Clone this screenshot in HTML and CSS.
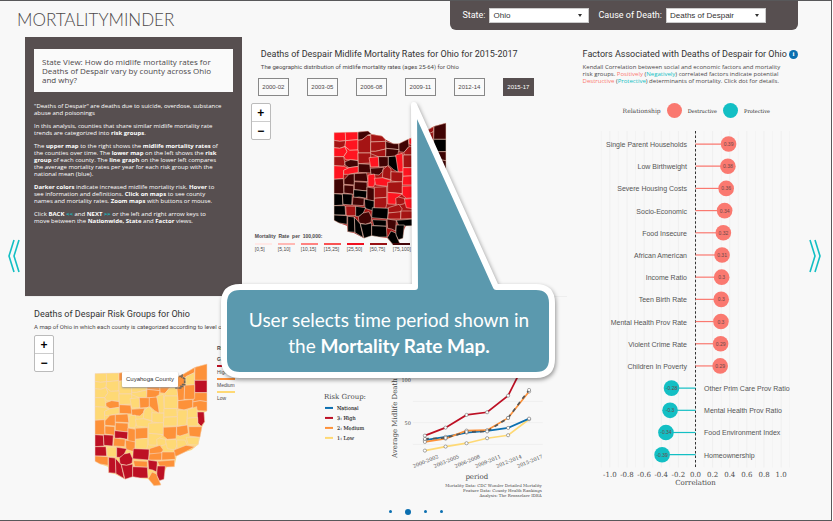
FILE: index.html
```html
<!DOCTYPE html>
<html lang="en">
<head>
<meta charset="utf-8">
<title>MortalityMinder</title>
<link rel="stylesheet" href="styles.css">
</head>
<body>
<div class="page">
  <header class="top">
    <h1 class="logo">MORTALITYMINDER</h1>
    <form class="filters">
      <label class="filter-label" for="state">State:</label>
      <span class="pick"><select id="state"><option>Ohio</option></select></span>
      <label class="filter-label cause" for="cause">Cause of Death:</label>
      <span class="pick"><select id="cause"><option>Deaths of Despair</option></select></span>
    </form>
  </header>

  <main class="board">
    <button class="step back" aria-label="Back"><svg width="12" height="34" viewBox="0 0 12 34"><path d="M6 1 1 17 6 33M11 1 6 17 11 33"/></svg></button>

    <section class="intro">
      <h2 class="intro-title">State View: How do midlife mortality rates for Deaths of Despair vary by county across Ohio and why?</h2>
      <p>"Deaths of Despair" are deaths due to suicide, overdose, substance<br>abuse and poisonings</p>
      <p>In this analysis, counties that share similar midlife mortality rate<br>trends are categorized into <b>risk groups</b>.</p>
      <p>The <b>upper map</b> to the right shows the <b>midlife mortality rates</b> of<br>the counties over time. The <b>lower map</b> on the left shows the <b>risk<br>group</b> of each county. The <b>line graph</b> on the lower left compares<br>the average mortality rates per year for each risk group with the<br>national mean (blue).</p>
      <p><b>Darker colors</b> indicate increased midlife mortality risk. <b>Hover</b> to<br>see information and definitions. <b>Click on maps</b> to see county<br>names and mortality rates. <b>Zoom maps</b> with buttons or mouse.</p>
      <p>Click <b>BACK <i>&lt;&lt;</i></b> and <b>NEXT <i>&gt;&gt;</i></b> or the left and right arrow keys to<br>move between the <b>Nationwide, State</b> and <b>Factor</b> views.</p>
    </section>

    <section class="rates">
      <h2 class="title">Deaths of Despair Midlife Mortality Rates for Ohio for 2015-2017</h2>
      <p class="sub">The geographic distribution of midlife mortality rates (ages 25-64) for Ohio</p>
      <div class="periods">
        <button>2000-02</button><button>2003-05</button><button>2006-08</button><button>2009-11</button><button>2012-14</button><button class="on">2015-17</button>
      </div>
      <div class="map-row">
        <div class="zoomer"><button aria-label="Zoom in">+</button><button aria-label="Zoom out">−</button></div>
        <svg class="map rate-map" id="rate-map" viewBox="42 36 342 374"></svg>
      </div>
      <div class="rate-key">
        <h3>Mortality&nbsp; Rate&nbsp; per&nbsp; 100,000:</h3>
        <ul>
          <li class="r1">[0,5]</li><li class="r2">[5,10]</li><li class="r3">[10,15]</li><li class="r4">[15,25]</li><li class="r5">[25,50]</li><li class="r6">[50,75]</li><li class="r7">[75,100]</li>
        </ul>
      </div>
    </section>

    <section class="groups">
      <h2 class="title">Deaths of Despair Risk Groups for Ohio</h2>
      <p class="sub">A map of Ohio in which each county is categorized according to level of risk</p>
      <div class="map-row">
        <div class="zoomer"><button aria-label="Zoom in">+</button><button aria-label="Zoom out">−</button></div>
        <div class="map-wrap">
          <svg class="map" id="risk-map" viewBox="42 36 342 374"></svg>
          <span class="tip">Cuyahoga County</span>
        </div>
        <div class="risk-key">
          <h3>Risk</h3><h3>Group:</h3>
          <ul><li class="high">High</li><li class="medium">Medium</li><li class="low">Low</li></ul>
        </div>
      </div>
    </section>

    <section class="trend">
      <svg id="trend" viewBox="322 360 226 140">
        <g class="serif">
          <text x="338" y="377" class="t6">Cuyahoga County</text>
          <text x="324" y="399" class="t7">Risk Group:</text>
          <g class="t6 key"><text x="337" y="410">National</text><text x="337" y="420">3: High</text><text x="337" y="430">2: Medium</text><text x="337" y="440">1: Low</text></g>
          <text x="411" y="382" class="t6" text-anchor="end">100</text>
          <text x="411" y="425" class="t6" text-anchor="end">50</text>
          <text transform="translate(397 458) rotate(-90)" class="t7">Average Midlife Deaths per 100,000</text>
          <text x="477" y="479" class="t7" text-anchor="middle">period</text>
          <g class="t5" text-anchor="end"><text x="542" y="487">Mortality Data: CDC Wonder Detailed Mortality</text><text x="542" y="492">Feature Data: County Health Rankings</text><text x="542" y="497">Analysis: The Rensselaer IDEA</text></g>
        </g>
        <g class="swatch"><path class="c-nat" d="M325 408h8"/><path class="c-high" d="M325 418h8"/><path class="c-med" d="M325 428h8"/><path class="c-low" d="M325 438h8"/></g>
        <path class="grid-line" d="M413 401.5h130M413 422.7h130M413 444.5h130"/>
      </svg>
    </section>

    <section class="factors">
      <h2 class="title">Factors Associated with Deaths of Despair for Ohio <button class="info" aria-label="Information">i</button></h2>
      <p class="explain">Kendall Correlation between social and economic factors and mortality<br>risk groups. <span class="bad">Positively</span> (<span class="good">Negatively</span>) correlated factors indicate potential<br><span class="bad">Destructive</span> (<span class="good">Protective</span>) determinants of mortality. Click dot for details.</p>
      <div class="relation"><span class="rel-title">Relationship</span><i class="dot bad-dot"></i><b>Destructive</b><i class="dot good-dot"></i><b>Protective</b></div>
      <svg id="factors" viewBox="583 125 215 365"></svg>
    </section>

    <button class="step next" aria-label="Next"><svg width="12" height="34" viewBox="0 0 12 34"><path d="M1 1 6 17 1 33M6 1 11 17 6 33"/></svg></button>

    <aside class="callout">
      <svg viewBox="217 98 344 286" width="344" height="286"><path d="M240 287H415L414 105 496 287H536Q552 287 552 303V359Q552 375 536 375H240Q224 375 224 359V303Q224 287 240 287Z"/></svg>
      <p>User selects time period shown in the <b>Mortality Rate Map.</b></p>
    </aside>
  </main>

  <nav class="pager"><a href="#1" aria-label="Page 1"></a><a href="#2" class="on" aria-label="Page 2"></a><a href="#3" aria-label="Page 3"></a><a href="#4" aria-label="Page 4"></a></nav>
</div>
<script src="charts.js"></script>
</body>
</html>
```
FILE: styles.css
```css
* { box-sizing: border-box; margin: 0; padding: 0; }
:root {
  --dark: #574f50;
  --ink: #4c484a;
  --coral: #fa7970;
  --teal: #13bfc4;
  --high: #bd1024;
  --medium: #fd9139;
  --low: #fed975;
}
body { background: #fff; color: var(--ink); font-family: Roboto, sans-serif; }
button { font: inherit; color: inherit; cursor: pointer; }
.page { min-height: 100vh; margin-right: 1px; border: solid #58585a; border-width: 1px 1px 1px 0; background: #f8f8f8; }

.top { display: flex; justify-content: space-between; align-items: flex-start; height: 36px; padding: 0 33px 0 17px; }
.logo { margin-top: 9px; font: 300 17px/20px Lato, sans-serif; color: #4c484a; }
.filters { display: flex; align-items: center; height: 29px; padding: 0 32px 0 12px; background: var(--dark); border-radius: 0 0 6px 6px; }
.filter-label { margin: 0 4px 2px 0; color: #fff; font-size: 9px; }
.cause { margin-left: 9px; }
.pick { position: relative; display: flex; }
.pick::after { content: ""; position: absolute; right: 7px; top: 6px; border: 2px solid transparent; border-top: 3px solid #333; pointer-events: none; }
.pick select { appearance: none; width: 100px; height: 15px; padding: 0 3px; border: 1px solid #ccc; border-radius: 0; background: #fff; color: #333; font: 8px "Liberation Sans", sans-serif; }

.board { position: relative; display: grid; grid-template-columns: 25px 217fr 341fr 215fr 33px; grid-template-rows: 260px auto; }
.step { grid-row: 1 / 3; align-self: center; justify-self: center; margin-bottom: 24px; border: 0; background: none; }
.step svg { display: block; }
.step path { fill: none; stroke: var(--teal); stroke-width: 1.6; }
.back { grid-column: 1; padding-left: 3px; }
.next { grid-column: 5; }

.intro { grid-area: 1 / 2; padding: 12px 9px; background: var(--dark); color: #fff; font: 6px/7px "Open Sans", sans-serif; white-space: nowrap; border-bottom: 1px solid #eee; }
.intro-title { margin-bottom: 11px; padding: 8px; background: #fafafa; color: var(--ink); font-size: 8px; font-weight: 400; line-height: 9px; white-space: normal; }
.intro p { margin-bottom: 6px; }
.intro i { color: var(--teal); font-style: normal; }

.title { font-size: 9px; font-weight: 400; line-height: 12px; color: #333; white-space: nowrap; }
.sub { margin-top: 2px; font-size: 6px; line-height: 10px; white-space: nowrap; }
.rates { grid-area: 1 / 3; margin-right: 16px; padding: 11px 0 0 9px; border-bottom: 1px solid #eee; }
.rates .title, .rates .sub { margin-left: 10px; }
.periods { display: flex; gap: 18px; margin: 6px 0 7px 7px; }
.periods button { width: 31px; height: 18px; border: 1px solid #888; background: #fafafa; font: 6px "Liberation Sans", sans-serif; }
.periods .on { background: var(--dark); border-color: var(--dark); color: #fff; }
.map-row { display: flex; align-items: flex-start; }
.zoomer { flex: none; width: 20px; border: 1px solid #bbb; border-radius: 2px; background: #fff; }
.zoomer button { display: block; width: 18px; height: 17px; border: 0; background: none; color: #000; font: bold 12px/16px "Liberation Sans", sans-serif; }
.zoomer button + button { height: 18px; border-top: 1px solid #ccc; }
.map { display: block; flex: none; width: 114px; }
.map polygon { stroke: #f3d5c4; stroke-width: 1.6; stroke-linejoin: round; }
.map .base { stroke: none; }
.rate-map { margin: 18px 0 0 62px; }
.rate-key { margin: -14px 0 0 4px; font: 5px/8px "Liberation Sans", sans-serif; }
.rate-key h3 { font-size: 5px; }
.rate-key ul { display: flex; gap: 6px; margin-top: 3px; list-style: none; }
.rate-key li { width: 17px; border-top: 2px solid; border-color: var(--rate); white-space: nowrap; }
.r1 { --rate: #ffe8e6; } .r2 { --rate: #ffb9b5; } .r3 { --rate: #ff8280; } .r4 { --rate: #f95353; }
.r5 { --rate: #f01020; } .r6 { --rate: #981015; } .r7 { --rate: #430408; }

.groups { grid-area: 2 / 2; padding: 11px 0 0 9px; }
.groups .sub { margin-bottom: 3px; }
.map-wrap { position: relative; margin: 27px 0 0 40px; }
.tip { position: absolute; left: 28px; top: 10px; padding: 0 4px; border-radius: 1px; background: #fff; box-shadow: 0 1px 2px #999; color: #333; font: 6px/15px "Liberation Sans", sans-serif; white-space: nowrap; }
.risk-key { margin: 8px 0 0 9px; font: 5px/11px "Liberation Sans", sans-serif; }
.risk-key h3 { font-size: 5px; }
.risk-key ul { list-style: none; }
.risk-key li { width: 18px; height: 13px; border-top: 2px solid; }
.risk-key .high { border-color: var(--high); }
.risk-key .medium { border-color: var(--medium); }
.risk-key .low { border-color: var(--low); }

.trend { grid-area: 2 / 3; padding: 63px 35px 0 80px; }
.trend svg, .factors svg { display: block; width: 100%; overflow: visible; }
.serif { font-family: "DejaVu Serif", serif; fill: #4a4a4a; }
.t5 { font-size: 4px; } .t6 { font-size: 5px; } .t7 { font-size: 7px; }
.key { fill: #222; stroke: #222; stroke-width: .1; }
.swatch path { fill: none; stroke-width: 2; }
.line { fill: none; stroke-width: 1.7; }
.c-nat { stroke: #0b6fb0; } .c-high { stroke: #bd1024; } .c-med { stroke: #fd9139; } .c-low { stroke: #fed975; }
.c-county { stroke: #555; stroke-dasharray: 4 4; }
.point { fill: #fff; stroke: #555; stroke-width: .5; }
.grid-line { stroke: #ededed; stroke-width: .7; }

.factors { grid-area: 1 / 4 / 3 / 5; padding-top: 11px; }
.info { width: 9px; height: 9px; border: 0; border-radius: 50%; background: #0b6fb0; color: #fff; font: bold 7px/9px "Liberation Serif", serif; vertical-align: middle; }
.explain { margin-top: 4px; font: 6px/7px "Open Sans", sans-serif; white-space: nowrap; }
.bad { color: var(--coral); } .good { color: var(--teal); }
.relation { display: flex; align-items: center; gap: 6px; margin: 18px 0 7px 40px; font: 5px "DejaVu Serif", serif; }
.rel-title { font-size: 6px; }
.relation b { font-weight: 400; color: #222; }
.dot { width: 15px; height: 15px; border-radius: 50%; }
.bad-dot { background: var(--coral); } .good-dot { background: var(--teal); }
.f-grid { stroke: #efefef; stroke-width: 1; }
.f-zero { stroke: #333; stroke-width: 1; stroke-dasharray: 2.5 2; }
.f-name { font: 7px "Liberation Sans", sans-serif; fill: #555; }
.f-value { font: 5px "Liberation Sans", sans-serif; fill: #6b4a4a; text-anchor: middle; }
.f-tick { font: 7px "DejaVu Serif", serif; fill: #4a4a4a; text-anchor: middle; }

.callout { position: absolute; left: 217px; top: 61px; width: 344px; }
.callout svg { display: block; filter: drop-shadow(1px 2px 2px #0006); }
.callout path { fill: #5b99ae; stroke: #fff; stroke-width: 6; stroke-linejoin: round; }
.callout p { position: absolute; inset: 209px 24px auto; color: #fff; font: 19px/26px Lato, sans-serif; font-variant-ligatures: none; text-align: center; }

.pager { display: flex; justify-content: center; align-items: center; gap: 13px; height: 8px; margin-top: 8px; }
.pager a { width: 3px; height: 3px; border-radius: 50%; background: #0b6fb0; }
.pager .on { width: 6px; height: 6px; }
```
FILE: charts.js
```js
const NS = "http://www.w3.org/2000/svg";

function add(parent, tag, attrs, text) {
  const el = document.createElementNS(NS, tag);
  for (const k in attrs) el.setAttribute(k, attrs[k]);
  if (text !== undefined) el.textContent = text;
  parent.appendChild(el);
  return el;
}

const RISK = { H: "#bd1024", M: "#fd9139", L: "#fed975" };
const RATE = { a: "#ff1420", b: "#a51414", c: "#400404", d: "#000000" };

const OUTLINE = "45,71 117,69 147,66 158,76 189,81 200,92 224,104 239,104 277,86 300,78 345,52 381,42 381,183 372,188 374,215 366,232 360,262 355,283 335,300 315,306 290,318 283,350 262,348 256,360 250,388 238,392 243,405 222,407 205,387 180,384 175,376 158,380 154,376 135,388 105,372 86,368 84,350 60,342 45,334";

/* Each county: risk group, rate band, polygon. */
const COUNTIES = [
  "La|45,71 79,70 80,95 62,97 45,94", "La|79,70 117,69 117,92 80,95", "Mc|117,69 147,66 158,76 146,79 137,87 129,92 117,94",
  "Lb|146,79 158,76 189,81 199,92 200,97 155,99 155,79", "Lb|45,94 62,97 80,95 78,112 62,118 45,116", "La|80,95 117,92 117,123 92,124 78,112",
  "Lb|117,94 129,92 146,79 155,80 155,132 117,132", "Lb|155,99 200,97 200,120 170,127 155,127", "Mc|200,97 224,104 239,104 240,122 201,118",
  "Mc|240,104 268,90 270,112 255,130 240,128", "Ma|270,90 304,75 314,84 314,104 304,114 290,112 270,104",
  "Mb|304,76 345,52 343,68 318,80 314,84", "Mc|345,52 381,42 381,91 344,91", "Lb|318,80 343,68 344,104 318,106",
  "Hd|344,91 381,91 381,128 344,128", "Mc|344,128 381,128 381,155 360,152 338,156", "Mc|338,156 360,152 381,155 381,183 356,182 338,174",
  "Mc|314,106 344,104 344,146 338,148 312,148", "Mb|290,112 314,108 312,150 294,152", "Lb|255,130 270,113 290,112 293,138 255,138",
  "La|45,116 62,118 78,113 84,128 74,143 45,143", "La|78,112 92,124 117,123 117,154 80,152 74,143 84,128",
  "Lb|45,143 74,143 78,164 74,172 45,170", "Mc|78,158 95,152 117,155 118,172 90,176 78,168", "Lb|117,132 155,132 155,162 118,164",
  "Lb|155,127 170,127 200,120 200,143 178,143 155,134", "La|150,146 178,143 180,173 155,174", "Mc|178,143 208,143 208,172 180,174",
  "Mc|201,118 240,122 235,142 200,143", "Md|208,143 230,141 238,160 238,190 224,182 208,168", "La|230,138 250,133 253,188 238,190",
  "Lb|253,138 293,138 294,176 253,176", "Mb|294,152 338,148 338,172 312,180 294,176", "La|45,170 74,172 90,178 74,184 73,209 45,211",
  "La|74,184 90,176 118,172 118,190 90,196 74,196", "Mc|118,164 152,166 156,192 118,190", "Mc|154,178 194,175 190,188 180,198 156,196",
  "Lb|192,182 205,170 216,180 216,212 190,206", "Lb|216,188 252,190 250,220 216,216", "La|252,176 290,176 292,200 252,202",
  "La|294,180 322,180 322,198 318,226 292,228 292,200", "La|322,180 350,170 353,202 322,205", "Hb|352,186 372,186 374,215 364,229 353,218",
  "La|322,205 353,202 354,228 322,228", "La|252,202 292,200 291,228 250,228", "Mc|75,212 90,196 106,194 106,228 75,226",
  "Mc|106,194 143,192 147,218 106,216", "La|147,198 166,195 170,215 164,234 147,232", "La|166,208 190,206 216,214 206,232 170,228",
  "Lb|206,220 250,218 250,254 206,250", "Mc|45,211 73,209 75,254 45,254", "Mc|75,228 104,230 104,256 75,252",
  "Mc|106,218 144,220 144,246 106,242", "Hd|104,242 144,246 142,268 120,264 104,266", "Mc|144,234 166,238 166,276 144,278",
  "Mb|166,235 203,233 203,265 166,268", "La|206,250 250,254 238,264 230,286 206,285", "Ma|250,232 290,230 288,266 262,268 250,258",
  "Mb|290,230 322,225 325,250 300,258 290,255", "Mb|326,230 366,230 360,262 328,258", "Hd|45,254 70,256 72,288 45,290",
  "Hd|70,254 100,256 98,288 72,286", "Mc|102,264 136,268 134,290 100,288", "Md|136,270 166,276 164,306 138,298",
  "Lb|166,268 203,265 203,286 200,298 166,298", "Lb|230,268 238,264 262,270 256,284 232,290", "La|256,270 288,268 292,282 285,300 262,296",
  "La|290,270 315,270 322,286 292,300", "La|318,262 358,262 354,285 325,284", "Mb|282,300 318,286 345,290 315,306 290,318 282,318",
  "Hd|45,290 78,290 80,318 45,318", "Lb|80,291 110,292 112,320 82,320", "Hd|110,292 140,296 132,314 120,322 110,322",
  "Hd|160,296 208,298 206,330 158,326", "Hc|118,324 132,312 150,308 158,326 156,340 140,346 120,342",
  "Mb|208,296 240,286 250,300 240,312 208,312", "Mb|208,312 246,308 245,330 206,330", "Md|45,318 84,320 84,346 60,342 45,334",
  "Hd|86,322 106,324 108,370 86,368", "Hd|106,324 124,345 133,386 108,371", "Hd|124,344 140,346 158,342 158,380 135,388",
  "Md|160,332 202,334 202,352 164,350", "Hd|158,350 202,352 204,384 180,384 158,380", "Hc|204,330 232,334 230,366 218,360 206,358",
  "Mb|246,306 284,306 286,328 245,330", "Md|232,334 284,330 283,350 240,352", "Hd|232,348 256,348 252,388 238,392 230,376",
  "Md|205,386 216,366 230,372 232,380 243,405 222,407"
];

function drawMap(id, pick, base) {
  const svg = document.getElementById(id);
  add(svg, "polygon", { points: OUTLINE, fill: base, class: "base" });
  COUNTIES.forEach(row => {
    const [code, points] = row.split("|");
    add(svg, "polygon", { points, fill: pick(code) });
  });
  return svg;
}
drawMap("rate-map", c => RATE[c[1]], RATE.b);
const risk = drawMap("risk-map", c => RISK[c[0]], RISK.L);
add(risk, "path", { d: "M288 110v4h14v-5h6v-5h6V86l-8-4v-6l-8 4", fill: "none", stroke: "#6d6459", "stroke-width": 5, "stroke-dasharray": "9 2" });

/* Risk-group trend lines */
const trend = document.getElementById("trend");
const XS = [425, 445.7, 466.7, 487.3, 508.3, 529.3];
[
  ["c-low", [450.7, 446.7, 443.3, 438.3, 435.3, 419.3]],
  ["c-nat", [440.3, 437, 432.7, 431, 428, 418.7]],
  ["c-med", [442, 438.7, 430.7, 430.3, 418, 391.5]],
  ["c-county", [439, 438, 432, 431.5, 418, 390]],
  ["c-high", [435.7, 427.7, 415, 412.3, 395.7, 354]]
].forEach(([cls, ys]) => {
  add(trend, "polyline", { class: "line " + cls, points: ys.map((y, i) => XS[i] + "," + y).join(" ") });
  ys.forEach((y, i) => add(trend, "circle", { class: "point", cx: XS[i], cy: y, r: 1.6 }));
});
["2000-2002", "2003-2005", "2006-2008", "2009-2011", "2012-2014", "2015-2017"].forEach((t, i) =>
  add(trend, "text", { class: "serif t6", "text-anchor": "end", transform: `translate(${XS[i] + 14} 458) rotate(-22)` }, t));

/* Factor correlations */
const factors = document.getElementById("factors");
const fx = v => 695.3 + v * 85.5;
for (let i = -11; i <= 11; i++) add(factors, "path", { class: "f-grid", d: `M${fx(i / 10)} 131V467`, opacity: i % 2 ? 0.5 : 1 });
add(factors, "path", { class: "f-zero", d: `M${fx(0)} 131V467` });
[
  ["Single Parent Households", 0.386, "0.39"], ["Low Birthweight", 0.378, "0.38"], ["Severe Housing Costs", 0.358, "0.36"],
  ["Socio-Economic", 0.34, "0.34"], ["Food Insecure", 0.325, "0.32"], ["African American", 0.31, "0.31"],
  ["Income Ratio", 0.305, "0.3"], ["Teen Birth Rate", 0.3, "0.3"], ["Mental Health Prov Rate", 0.297, "0.3"],
  ["Violent Crime Rate", 0.293, "0.29"], ["Children In Poverty", 0.288, "0.29"], ["Other Prim Care Prov Ratio", -0.28, "-0.28"],
  ["Mental Health Prov Ratio", -0.297, "-0.3"], ["Food Environment Index", -0.345, "-0.34"], ["Homeownership", -0.39, "-0.39"]
].forEach(([name, v, label], i) => {
  const y = 144 + i * 22.15, color = v > 0 ? "#fa7970" : "#13bfc4";
  add(factors, "path", { d: `M${fx(0)} ${y}H${fx(v)}`, stroke: color, "stroke-width": 1.2 });
  add(factors, "circle", { cx: fx(v), cy: y, r: 7.8, fill: color });
  add(factors, "text", { class: "f-value", x: fx(v), y: y + 2 }, label);
  add(factors, "text", { class: "f-name", x: fx(v > 0 ? -0.1 : 0.1), y: y + 3, "text-anchor": v > 0 ? "end" : "start" }, name);
});
for (let i = -5; i <= 5; i++) add(factors, "text", { class: "f-tick", x: fx(i / 5), y: 476 }, (i / 5).toFixed(1));
add(factors, "text", { class: "f-tick", x: fx(0), y: 484 }, "Correlation");
```
